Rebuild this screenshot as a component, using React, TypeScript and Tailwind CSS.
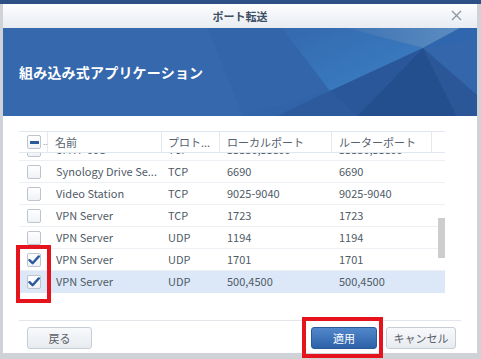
import React from "react"

type Row = { name: string; proto: string; local: string; router: string; checked?: boolean; selected?: boolean }

const rows: Row[] = [
	{ name: "Synology Drive Se...", proto: "TCP", local: "6690", router: "6690" },
	{ name: "Video Station", proto: "TCP", local: "9025-9040", router: "9025-9040" },
	{ name: "VPN Server", proto: "TCP", local: "1723", router: "1723" },
	{ name: "VPN Server", proto: "UDP", local: "1194", router: "1194" },
	{ name: "VPN Server", proto: "UDP", local: "1701", router: "1701", checked: true },
	{ name: "VPN Server", proto: "UDP", local: "500,4500", router: "500,4500", checked: true, selected: true },
]

const CheckBox = ({ checked, partial }: { checked?: boolean; partial?: boolean }) => (
	<div className="w-[14px] h-[14px] border border-[#bcc5cf] rounded-[2px] bg-gradient-to-b from-white to-[#f0f2f5] flex items-center justify-center">
		{checked && (
			<svg width="12" height="10" viewBox="0 0 12 10">
				<path d="M1.5 5.2 L4.6 8.2 L10.8 1.4" fill="none" stroke="#2a5a9c" strokeWidth="2.4" strokeLinecap="round" strokeLinejoin="round" />
			</svg>
		)}
		{partial && <div className="w-[9px] h-[3px] bg-[#2a5a9c]" />}
	</div>
)

const Banner = () => (
	<div className="relative h-[88px] bg-[#3568ad] flex items-center pl-[16px] overflow-hidden">
		<svg className="absolute inset-0" width="474" height="88" viewBox="0 0 474 88">
			<defs>
				<linearGradient id="mid" x1="0" y1="0" x2="1" y2="1">
					<stop offset="0" stopColor="#3469ae" />
					<stop offset="1" stopColor="#3b80c5" />
				</linearGradient>
				<linearGradient id="toplight" x1="0" y1="0" x2="1" y2="0">
					<stop offset="0" stopColor="#3f74b4" />
					<stop offset="1" stopColor="#5c8cc0" />
				</linearGradient>
			</defs>
			<polygon points="205,0 279,0 327,63 240,88" fill="#3265aa" />
			<polygon points="279,0 344,0 420,20 327,63" fill="url(#mid)" />
			<polygon points="344,0 457,0 420,20" fill="url(#toplight)" />
			<polygon points="457,0 474,0 474,10 420,20" fill="#2f66ae" />
			<polygon points="420,20 474,10 474,67" fill="#3366ab" />
			<polygon points="240,88 327,63 274,88" fill="#3063a7" />
			<polygon points="274,88 327,63 354,88" fill="#2c5a9d" />
			<polygon points="327,63 420,20 354,88" fill="#2a579a" />
			<polygon points="420,20 454,88 354,88" fill="#244f8f" />
			<polygon points="420,20 474,67 474,88 454,88" fill="#2b5698" />
		</svg>
		<div className="relative text-white text-[14px] font-bold tracking-[0.2px]">組み込み式アプリケーション</div>
	</div>
)

const App = () => {
	return (
		<div className="relative w-[481px] h-[359px] overflow-hidden bg-[#cfd3d8] font-['Noto_Sans_CJK_JP',sans-serif]">
			<div className="h-[4px] bg-[#2d5187]" />
			<div className="ml-[3px] w-[474px] h-[349px] bg-white flex flex-col">
				{/* title bar */}
				<div className="relative h-[24px] bg-gradient-to-b from-[#fdfdfe] to-[#e8ecf1] flex items-center justify-center">
					<span className="text-[11px] font-semibold text-[#3d4f63]">ポート転送</span>
					<svg className="absolute right-[15px] top-[6px]" width="11" height="11" viewBox="0 0 11 11">
						<path d="M1 1 L10 10 M10 1 L1 10" stroke="#8d97a2" strokeWidth="1.4" />
					</svg>
				</div>
				<Banner />

				{/* table */}
				<div className="flex-1 px-[16px] pt-[15px]">
					<div className="w-[426px] text-[11px] text-[#4f5a66]">
						<div className="flex h-[22px] border-t border-b border-[#e1e7ee] text-[#56616d]">
							<div className="w-[29px] flex items-center pl-[8px] border-r border-[#e4e9ef] relative">
								<CheckBox partial />
								<span className="absolute left-[24px] top-[4px] text-[8px] text-[#888]">..</span>
							</div>
							<div className="w-[114px] flex items-center pl-[7px] border-r border-[#e4e9ef]">名前</div>
							<div className="w-[58px] flex items-center pl-[6px] border-r border-[#e4e9ef]">プロト...</div>
							<div className="w-[112px] flex items-center pl-[7px] border-r border-[#e4e9ef]">ローカルポート</div>
							<div className="w-[100px] flex items-center pl-[7px] border-r border-[#e4e9ef]">ルーターポート</div>
							<div className="flex-1" />
						</div>
						<div className="relative h-[152px] overflow-hidden">
							<div className="flex h-[22px] -mt-[14px] border-b border-[#eceff3]">
								<div className="w-[29px] flex items-center pl-[8px]">
									<CheckBox />
								</div>
								<div className="w-[114px] flex items-center pl-[8px]">SMTP 993</div>
								<div className="w-[58px] flex items-center pl-[6px]">TCP</div>
								<div className="w-[112px] flex items-center pl-[7px]">55536,55899</div>
								<div className="w-[100px] flex items-center pl-[7px]">55536,55899</div>
							</div>
							{rows.map((r, i) => (
								<div
									key={i}
									className={`flex h-[22px] border-b ${r.selected ? "bg-[#dce8f7] border-[#dce8f7]" : "border-[#eceff3]"}`}>
									<div className="w-[29px] flex items-center pl-[8px]">
										<CheckBox checked={r.checked} />
									</div>
									<div className="w-[114px] flex items-center pl-[8px] whitespace-nowrap">{r.name}</div>
									<div className="w-[58px] flex items-center pl-[6px]">{r.proto}</div>
									<div className="w-[112px] flex items-center pl-[7px]">{r.local}</div>
									<div className="w-[100px] flex items-center pl-[7px]">{r.router}</div>
								</div>
							))}
							<div className="absolute left-[419px] top-[65px] w-[7px] h-[40px] bg-[#cdcdcd]" />
						</div>
					</div>
				</div>

				{/* footer */}
				<div className="mx-[16px] h-[33px] border-t border-[#e2e6ea] flex items-start pt-[6px] pl-[8px] pr-[5px]">
					<button className="w-[65px] h-[22px] rounded-[3px] border border-[#c6cdd5] bg-gradient-to-b from-[#f8f9fb] to-[#e7ebf0] text-[11px] text-[#5a5f66]">
						戻る
					</button>
					<div className="flex-1" />
					<button className="w-[66px] h-[22px] rounded-[3px] border border-[#2a5a9a] bg-gradient-to-b from-[#5288cb] to-[#2c61a7] text-[11px] text-white">
						適用
					</button>
					<button className="ml-[9px] w-[70px] h-[22px] rounded-[3px] border border-[#c6cdd5] bg-gradient-to-b from-[#f8f9fb] to-[#e7ebf0] text-[11px] text-[#5a5f66]">
						キャンセル
					</button>
				</div>
			</div>

			{/* annotations */}
			<div className="absolute left-[16px] top-[245px] w-[35px] h-[58px] border-[4px] border-[#e5131b]" />
			<div className="absolute left-[302px] top-[317px] w-[81px] h-[41px] border-[4px] border-[#e5131b]" />
		</div>
	)
}

export default App
